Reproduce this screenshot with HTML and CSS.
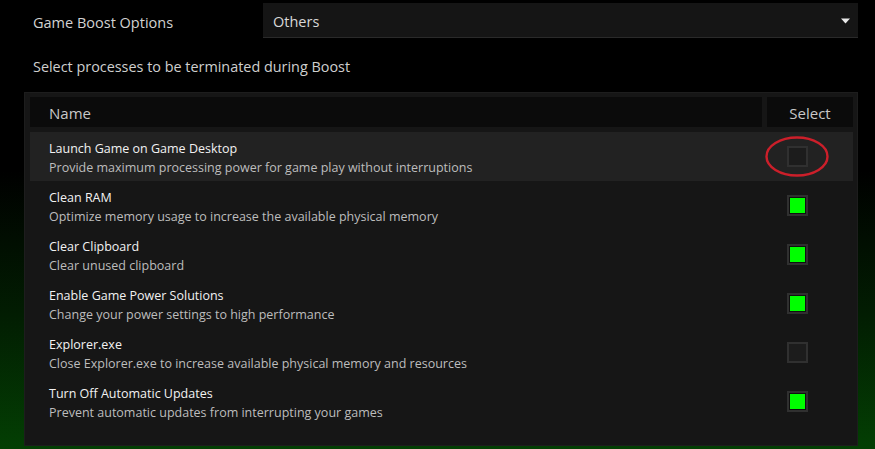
FILE: index.html
```html
<!DOCTYPE html>
<html lang="en">
<head>
<meta charset="utf-8">
<title>Game Boost Options</title>
<link rel="stylesheet" href="styles.css">
</head>
<body>
<div class="page">
  <div class="top">
    <div class="label">Game Boost Options</div>
    <div class="select">
      <span>Others</span>
      <svg class="caret" width="9" height="6" viewBox="0 0 9 6"><path d="M0 0.5H9L4.5 5.5Z" fill="#e8e8e8"/></svg>
    </div>
  </div>
  <div class="subtitle">Select processes to be terminated during Boost</div>
  <div class="panel">
    <div class="head">
      <div class="hname">Name</div>
      <div class="hsel">Select</div>
    </div>
    <div class="row hl">
      <div class="txt"><div class="t">Launch Game on Game Desktop</div><div class="d">Provide maximum processing power for game play without interruptions</div></div>
      <div class="cell"><span class="box"></span>
        <svg class="ring" width="64" height="41" viewBox="0 0 64 41"><ellipse cx="32" cy="20.5" rx="30.5" ry="19" fill="none" stroke="#cc1f2a" stroke-width="2.4"/></svg>
      </div>
    </div>
    <div class="row">
      <div class="txt"><div class="t">Clean RAM</div><div class="d">Optimize memory usage to increase the available physical memory</div></div>
      <div class="cell"><span class="box on"></span></div>
    </div>
    <div class="row">
      <div class="txt"><div class="t">Clear Clipboard</div><div class="d">Clear unused clipboard</div></div>
      <div class="cell"><span class="box on"></span></div>
    </div>
    <div class="row">
      <div class="txt"><div class="t">Enable Game Power Solutions</div><div class="d">Change your power settings to high performance</div></div>
      <div class="cell"><span class="box on"></span></div>
    </div>
    <div class="row">
      <div class="txt"><div class="t">Explorer.exe</div><div class="d">Close Explorer.exe to increase available physical memory and resources</div></div>
      <div class="cell"><span class="box"></span></div>
    </div>
    <div class="row">
      <div class="txt"><div class="t">Turn Off Automatic Updates</div><div class="d">Prevent automatic updates from interrupting your games</div></div>
      <div class="cell"><span class="box on"></span></div>
    </div>
  </div>
</div>
</body>
</html>
```

FILE: styles.css
```css
html, body {
  margin: 0;
  height: 100%;
}
body {
  background: linear-gradient(to bottom, #000 0%, #000 38%, #021d02 70%, #033f03 100%);
  font-family: "Open Sans", "DejaVu Sans", sans-serif;
  color: #cfcfcf;
  overflow: hidden;
}
.page {
  padding: 3px 17px 0 24px;
  width: 834px;
}
.top {
  display: flex;
  align-items: center;
  height: 35px;
}
.label {
  width: 230px;
  padding: 4px 0 0 9px;
  font-size: 14.5px;
  color: #d2d2d2;
}
.select {
  flex: 1;
  height: 35px;
  box-sizing: border-box;
  background: #151515;
  border-bottom: 1px solid #2a2a2a;
  display: flex;
  align-items: center;
  justify-content: space-between;
  padding: 3px 8px 0 10px;
  font-size: 14.5px;
  color: #d8d8d8;
}
.caret { margin-top: -2px; }
.subtitle {
  padding-left: 9px;
  margin-top: 19px;
  height: 21px;
  font-size: 14.4px;
  color: #cfcfcf;
}
.panel {
  margin-top: 14px;
  box-sizing: border-box;
  height: 354px;
  background: #161616;
  border: 1px solid #1d1d1d;
  padding: 4px 4px 0 5px;
}
.head {
  display: flex;
  gap: 5px;
  height: 30px;
  margin-bottom: 5px;
}
.hname, .hsel {
  background: #0b0b0b;
  display: flex;
  align-items: center;
  padding-top: 2px;
  box-sizing: border-box;
  font-size: 15px;
  color: #c8c8c8;
}
.hname {
  flex: 1;
  padding-left: 19px;
}
.hsel {
  width: 86px;
  justify-content: center;
}
.row {
  display: flex;
  align-items: center;
  height: 49px;
}
.row.hl { background: #222; }
.txt {
  flex: 1;
  padding: 2px 0 0 19px;
}
.t {
  font-size: 12.5px;
  color: #f2f2f2;
  line-height: 19px;
}
.d {
  font-size: 12.5px;
  color: #bdbdbd;
  line-height: 19px;
}
.cell {
  width: 86px;
  position: relative;
  height: 100%;
  display: flex;
  align-items: center;
}
.box {
  margin-left: 20px;
  width: 21px;
  height: 21px;
  box-sizing: border-box;
  border: 2px solid #303030;
  background: #1c1c1c;
  padding: 1px;
}
.box.on { background: #101010; }
.box.on::after {
  content: "";
  display: block;
  width: 15px;
  height: 15px;
  background: #0f0;
}
.ring {
  position: absolute;
  left: -2px;
  top: 4px;
}
```
